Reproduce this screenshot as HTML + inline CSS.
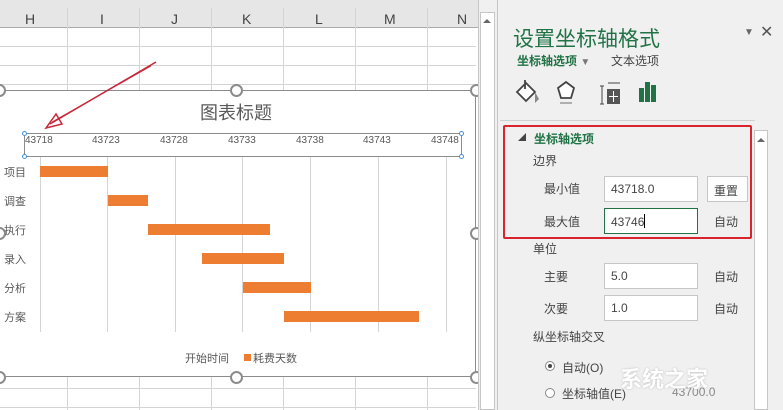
<!DOCTYPE html>
<html><head><meta charset="utf-8"><style>
*{margin:0;padding:0;box-sizing:border-box}
body{width:783px;height:410px;overflow:hidden;background:#fff;font-family:"Liberation Sans","Microsoft YaHei","Noto Sans CJK SC",sans-serif;position:relative;color:#595959}
.a{position:absolute}
.vl{position:absolute;width:1px;background:#d4d4d4}
.hl{position:absolute;height:1px;background:#d4d4d4}
.bar{position:absolute;height:11px;background:#ed7d31}
.lab{position:absolute;font-size:11px;color:#595959;left:4px}
.tk{position:absolute;top:135px;font-size:10px;color:#595959}
.h{position:absolute;top:11px;font-size:14px;color:#444}
.p{font-size:12px;color:#444;position:absolute}
.in{position:absolute;background:#fff;border:1px solid #c6c6c6;height:26px;width:94px;font-size:12px;padding:5px 6px;color:#444}
</style></head><body>
<div class="a" style="left:0;top:0;width:478px;height:28px;background:#e6e6e6;border-bottom:1px solid #ababab"></div>
<div class="h" style="left:25px">H</div><div class="h" style="left:100px">I</div><div class="h" style="left:171px">J</div><div class="h" style="left:242px">K</div><div class="h" style="left:315px">L</div><div class="h" style="left:384px">M</div><div class="h" style="left:457px">N</div>
<div class="vl" style="left:67px;top:8px;height:402px"></div><div class="vl" style="left:139px;top:8px;height:402px"></div><div class="vl" style="left:211px;top:8px;height:402px"></div><div class="vl" style="left:283px;top:8px;height:402px"></div><div class="vl" style="left:355px;top:8px;height:402px"></div><div class="vl" style="left:427px;top:8px;height:402px"></div>
<div class="hl" style="left:0;top:46px;width:476px"></div><div class="hl" style="left:0;top:65px;width:476px"></div><div class="hl" style="left:0;top:84px;width:476px"></div><div class="hl" style="left:0;top:388px;width:476px"></div><div class="hl" style="left:0;top:407px;width:476px"></div>
<div class="a" style="left:0;top:90px;width:476px;height:287px;background:#fff;border-top:1px solid #8c8c8c;border-bottom:1px solid #8c8c8c;border-right:1px solid #8c8c8c"></div>
<div class="a" style="left:230px;top:84px;width:13px;height:13px;border:2px solid #8c8c8c;border-radius:50%;background:#fff"></div>
<div class="a" style="left:230px;top:371px;width:13px;height:13px;border:2px solid #8c8c8c;border-radius:50%;background:#fff"></div>
<div class="a" style="left:470px;top:84px;width:13px;height:13px;border:2px solid #8c8c8c;border-radius:50%;background:#fff"></div>
<div class="a" style="left:470px;top:227px;width:13px;height:13px;border:2px solid #8c8c8c;border-radius:50%;background:#fff"></div>
<div class="a" style="left:470px;top:371px;width:13px;height:13px;border:2px solid #8c8c8c;border-radius:50%;background:#fff"></div>
<div class="a" style="left:-7px;top:84px;width:13px;height:13px;border:2px solid #8c8c8c;border-radius:50%;background:#fff"></div>
<div class="a" style="left:-7px;top:227px;width:13px;height:13px;border:2px solid #8c8c8c;border-radius:50%;background:#fff"></div>
<div class="a" style="left:-7px;top:371px;width:13px;height:13px;border:2px solid #8c8c8c;border-radius:50%;background:#fff"></div>
<div class="a" style="left:200px;top:99px;font-size:18px;color:#595959">图表标题</div>
<div class="vl" style="left:40px;top:157px;height:175px"></div><div class="vl" style="left:107px;top:157px;height:175px"></div><div class="vl" style="left:175px;top:157px;height:175px"></div><div class="vl" style="left:242px;top:157px;height:175px"></div><div class="vl" style="left:310px;top:157px;height:175px"></div><div class="vl" style="left:378px;top:157px;height:175px"></div><div class="vl" style="left:446px;top:157px;height:175px"></div>
<div class="a" style="left:24px;top:133px;width:438px;height:24px;border:1px solid #8c8c8c"></div>
<div class="a" style="left:22px;top:131px;width:5px;height:5px;border:1px solid #4a90d9;border-radius:50%;background:#fff"></div>
<div class="a" style="left:459px;top:131px;width:5px;height:5px;border:1px solid #4a90d9;border-radius:50%;background:#fff"></div>
<div class="a" style="left:22px;top:154px;width:5px;height:5px;border:1px solid #4a90d9;border-radius:50%;background:#fff"></div>
<div class="a" style="left:459px;top:154px;width:5px;height:5px;border:1px solid #4a90d9;border-radius:50%;background:#fff"></div>
<div class="tk" style="left:25px">43718</div><div class="tk" style="left:92px">43723</div><div class="tk" style="left:160px">43728</div><div class="tk" style="left:228px">43733</div><div class="tk" style="left:296px">43738</div><div class="tk" style="left:363px">43743</div><div class="tk" style="left:431px">43748</div>
<div class="lab" style="top:164px">项目</div><div class="lab" style="top:193px">调查</div><div class="lab" style="top:222px">执行</div><div class="lab" style="top:251px">录入</div><div class="lab" style="top:280px">分析</div><div class="lab" style="top:309px">方案</div>
<div class="bar" style="left:40px;top:166px;width:68px"></div>
<div class="bar" style="left:108px;top:195px;width:40px"></div>
<div class="bar" style="left:148px;top:224px;width:122px"></div>
<div class="bar" style="left:202px;top:253px;width:82px"></div>
<div class="bar" style="left:243px;top:282px;width:68px"></div>
<div class="bar" style="left:284px;top:311px;width:135px"></div>
<div class="a" style="left:185px;top:350px;font-size:11px">开始时间</div>
<div class="a" style="left:244px;top:354px;width:7px;height:7px;background:#ed7d31"></div>
<div class="a" style="left:253px;top:350px;font-size:11px">耗费天数</div>
<svg class="a" style="left:0;top:0" width="200" height="140"><line x1="156" y1="62" x2="50" y2="124" stroke="#c8283a" stroke-width="1.5"/><line x1="151" y1="66" x2="52" y2="122" stroke="#c8283a" stroke-width="1"/><polygon points="46,128 56,114 62,124" fill="none" stroke="#c8283a" stroke-width="1.5"/></svg>
<div class="a" style="left:478px;top:0;width:19px;height:410px;background:#f0f0f0;border-left:1px solid #c6c6c6"></div>
<div class="a" style="left:480px;top:12px;width:15px;height:398px;background:#fff;border:1px solid #c6c6c6"></div>
<div class="a" style="left:483px;top:15px;width:0;height:0;border:4px solid transparent;border-bottom:4px solid #666"></div>
<div class="a" style="left:497px;top:0;width:286px;height:410px;background:#f0f0f0;border-left:1px solid #c6c6c6"></div>
<div class="a" style="left:513px;top:23px;font-size:21px;color:#217346">设置坐标轴格式</div>
<div class="a" style="left:744px;top:27px;font-size:10px;color:#666">▼</div>
<div class="a" style="left:760px;top:22px;font-size:16px;color:#555">✕</div>
<div class="a" style="left:517px;top:52px;font-size:12px;color:#217346;font-weight:bold">坐标轴选项 <span style="color:#777;font-size:10px">▼</span></div>
<div class="a" style="left:611px;top:52px;font-size:12px;color:#444">文本选项</div>
<svg class="a" style="left:514px;top:78px" width="150" height="30"><path d="M3 14 L12 5 L21 14 L12 23 Z" fill="#fff" stroke="#444" stroke-width="1.8"/><path d="M21 14 l4 7 -4 4 z" fill="#888"/><path d="M11 2 v9" stroke="#444" stroke-width="1.8"/><path d="M44 10 L52 4 L60 10 L57 20 L47 20 Z" fill="#fff" stroke="#444" stroke-width="1.8"/><path d="M46 25 h12" stroke="#999" stroke-width="1.5"/><path d="M94 5 h12 M88 8 v18 M86 8 h4 M86 26 h4" stroke="#444"/><rect x="93" y="11" width="13" height="15" fill="#555"/><path d="M99.5 13 v11 M95 18.5 h9" stroke="#fff"/><rect x="125" y="10" width="5" height="14" fill="#217346"/><rect x="131" y="4" width="5" height="20" fill="#217346"/><rect x="137" y="7" width="5" height="17" fill="#217346"/></svg>
<div class="a" style="left:500px;top:120px;width:255px;height:290px;border-top:1px solid #d0d0d0"></div>
<div class="a" style="left:754px;top:130px;width:14px;height:280px;background:#fff;border:1px solid #c6c6c6"></div>
<div class="a" style="left:757px;top:134px;width:0;height:0;border:4px solid transparent;border-bottom:4px solid #666"></div>
<div class="a" style="left:503px;top:125px;width:249px;height:114px;border:2px solid #d9232e;border-radius:2px"></div>
<div class="a" style="left:518px;top:132px;font-size:8px;color:#444">◢</div>
<div class="a" style="left:534px;top:130px;font-size:12px;color:#217346;font-weight:bold">坐标轴选项</div>
<div class="p" style="left:533px;top:152px">边界</div>
<div class="p" style="left:544px;top:180px">最小值</div>
<div class="in" style="left:604px;top:176px">43718.0</div>
<div class="a" style="left:707px;top:176px;width:41px;height:26px;background:#fdfdfd;border:1px solid #c6c6c6;font-size:12px;padding:5px 6px;color:#444">重置</div>
<div class="p" style="left:544px;top:213px">最大值</div>
<div class="in" style="left:604px;top:208px;border-color:#217346">43746<span style="display:inline-block;width:1px;height:14px;background:#000;vertical-align:-2px"></span></div>
<div class="p" style="left:714px;top:213px">自动</div>
<div class="p" style="left:533px;top:240px">单位</div>
<div class="p" style="left:544px;top:268px">主要</div>
<div class="in" style="left:604px;top:263px">5.0</div>
<div class="p" style="left:714px;top:268px">自动</div>
<div class="p" style="left:544px;top:300px">次要</div>
<div class="in" style="left:604px;top:295px">1.0</div>
<div class="p" style="left:714px;top:300px">自动</div>
<div class="p" style="left:533px;top:328px">纵坐标轴交叉</div>
<div class="a" style="left:545px;top:361px;width:10px;height:10px;border:1px solid #888;border-radius:50%;background:#fff"></div>
<div class="a" style="left:548px;top:364px;width:4px;height:4px;border-radius:50%;background:#444"></div>
<div class="p" style="left:562px;top:359px">自动(O)</div>
<div class="a" style="left:545px;top:388px;width:10px;height:10px;border:1px solid #888;border-radius:50%;background:#fff"></div>
<div class="p" style="left:562px;top:385px">坐标轴值(E)</div>
<div class="p" style="left:672px;top:385px;color:#888">43700.0</div>
<div class="a" style="left:620px;top:362px;font-size:22px;color:#fff;font-weight:bold;text-shadow:0 0 2px #bbb">系统之家</div>
</body></html>
